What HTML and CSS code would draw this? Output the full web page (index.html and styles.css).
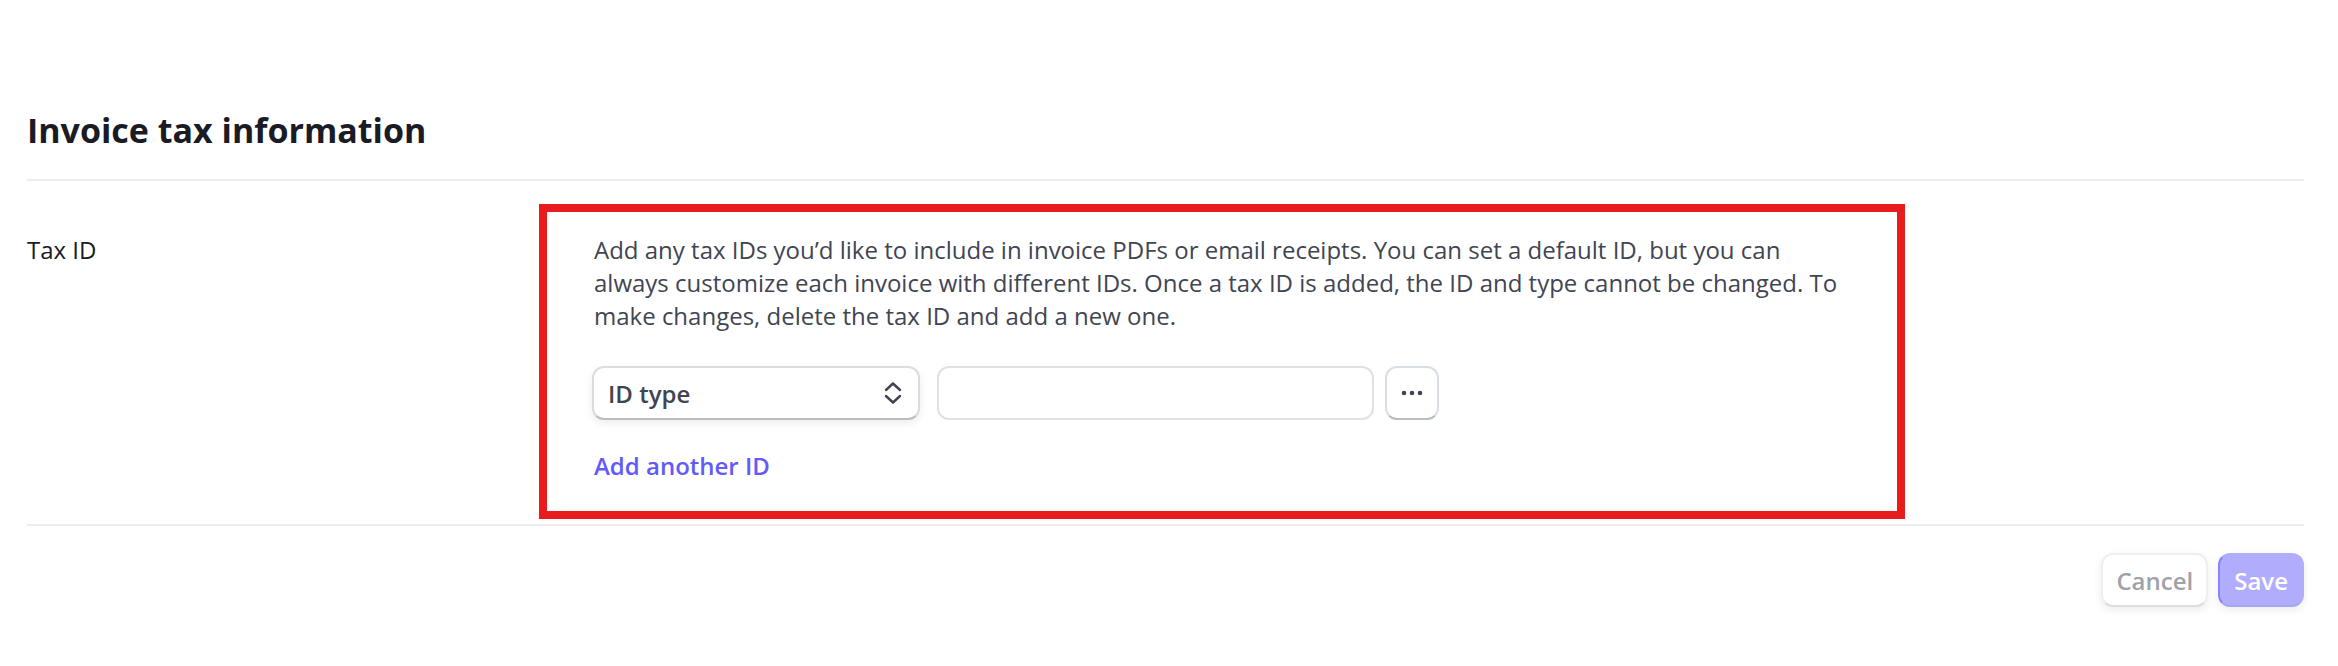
FILE: index.html
```html
<!DOCTYPE html>
<html lang="en">
<head>
<meta charset="utf-8">
<meta name="viewport" content="width=device-width, initial-scale=1">
<title>Invoice tax information</title>
<link rel="stylesheet" href="styles.css">
</head>
<body>
<main class="page">
  <h1 class="title">Invoice tax information</h1>
  <form class="settings">
    <section class="row">
      <h2 class="row-label" id="tax-id-label">Tax ID</h2>
      <div class="panel">
        <p class="description">Add any tax IDs you’d like to include in invoice PDFs or email receipts. You can set a default ID, but you can always customize each invoice with different IDs. Once a tax ID is added, the ID and type cannot be changed. To make changes, delete the tax ID and add a new one.</p>
        <div class="fields">
          <div class="select-wrap">
            <select class="control select" aria-label="ID type">
              <option>ID type</option>
            </select>
            <svg class="select-icon" viewBox="0 0 18 24" width="18" height="24" aria-hidden="true">
              <path d="M2 9 9 2.500 16 9M2 15 9 21.500 16 15" fill="none" stroke="#414552" stroke-width="2.400" stroke-linecap="round" stroke-linejoin="round"/>
            </svg>
          </div>
          <input class="control input" type="text" aria-labelledby="tax-id-label">
          <button class="control more" type="button" aria-label="More options">
            <svg viewBox="0 0 22 6" width="22" height="6" aria-hidden="true">
              <g fill="#414552"><circle cx="3" cy="3" r="2.300"/><circle cx="11" cy="3" r="2.300"/><circle cx="19" cy="3" r="2.300"/></g>
            </svg>
          </button>
        </div>
        <button class="add" type="button">Add another ID</button>
      </div>
    </section>
    <div class="actions">
      <button class="control cancel" type="button">Cancel</button>
      <button class="control save" type="submit">Save</button>
    </div>
  </form>
</main>
</body>
</html>
```
FILE: styles.css
```css
* {
  box-sizing: border-box;
}

body {
  margin: 0;
  background: #fff;
  color: #414552;
  font-family: "Open Sans", "Segoe UI", sans-serif;
  font-size: 24px;
  line-height: 33px;
}

.page {
  padding: 106px 34px 48px 27px;
}

.title {
  margin: 0;
  padding-bottom: 25px;
  border-bottom: 2px solid #ebeef1;
  color: #1a1b25;
  font-size: 34px;
  font-weight: 700;
  line-height: 48px;
}

.row {
  display: grid;
  grid-template-columns: 512px 60%;
  padding: 23px 0 5px;
  border-bottom: 2px solid #ebeef1;
}

.row-label {
  margin: 0;
  padding-top: 29px;
  color: #1a1b25;
  font-size: 24px;
  font-weight: 500;
}

.panel {
  padding: 21px 45px 29px;
  border: 8px solid #e81c1c;
}

.description {
  max-width: 1256px;
  margin: 0 0 34px;
  padding-left: 2px;
}

.fields {
  display: flex;
  align-items: center;
  margin-bottom: 29px;
}

.control {
  height: 54px;
  border: 2px solid #e0e1e3;
  border-radius: 12px;
  background: #fff;
  color: #414552;
  font: inherit;
  font-weight: 600;
}

.select-wrap {
  display: grid;
  flex: 0 1 328px;
  align-items: center;
  margin-right: 17px;
}

.select-wrap > * {
  grid-area: 1 / 1;
}

.select {
  width: 100%;
  padding: 0 48px 0 14px;
  border-color: #dcdcde;
  border-bottom-color: #bcbcbe;
  box-shadow: 0 3px 8px rgba(0, 0, 0, 0.08);
  appearance: none;
}

.select-icon {
  justify-self: end;
  margin-right: 18px;
  pointer-events: none;
}

.input {
  flex: 0 1 437px;
  min-width: 0;
  margin-right: 11px;
  padding: 0 14px;
  font-weight: 400;
}

.more {
  display: flex;
  flex: none;
  align-items: center;
  justify-content: center;
  width: 54px;
  padding: 0;
  border-color: #d8dee4;
  border-bottom-color: #b8bec4;
}

.add {
  display: block;
  padding: 0 2px;
  border: 0;
  background: none;
  color: #625afa;
  font: inherit;
  font-weight: 600;
}

.actions {
  display: flex;
  justify-content: flex-end;
  gap: 10px;
  padding-top: 27px;
}

.cancel {
  padding: 0 13px;
  border-color: #efeff0;
  border-bottom-color: #dededf;
  box-shadow: 0 3px 8px rgba(0, 0, 0, 0.08);
  color: #a0a2a8;
}

.save {
  padding: 0 14px;
  border-color: #b1adfd;
  border-bottom-color: #a9a5f2;
  border-left-color: #8a83fb;
  background: #b1adfd;
  box-shadow: 0 3px 8px rgba(0, 0, 0, 0.08);
  color: #fff;
}
```
